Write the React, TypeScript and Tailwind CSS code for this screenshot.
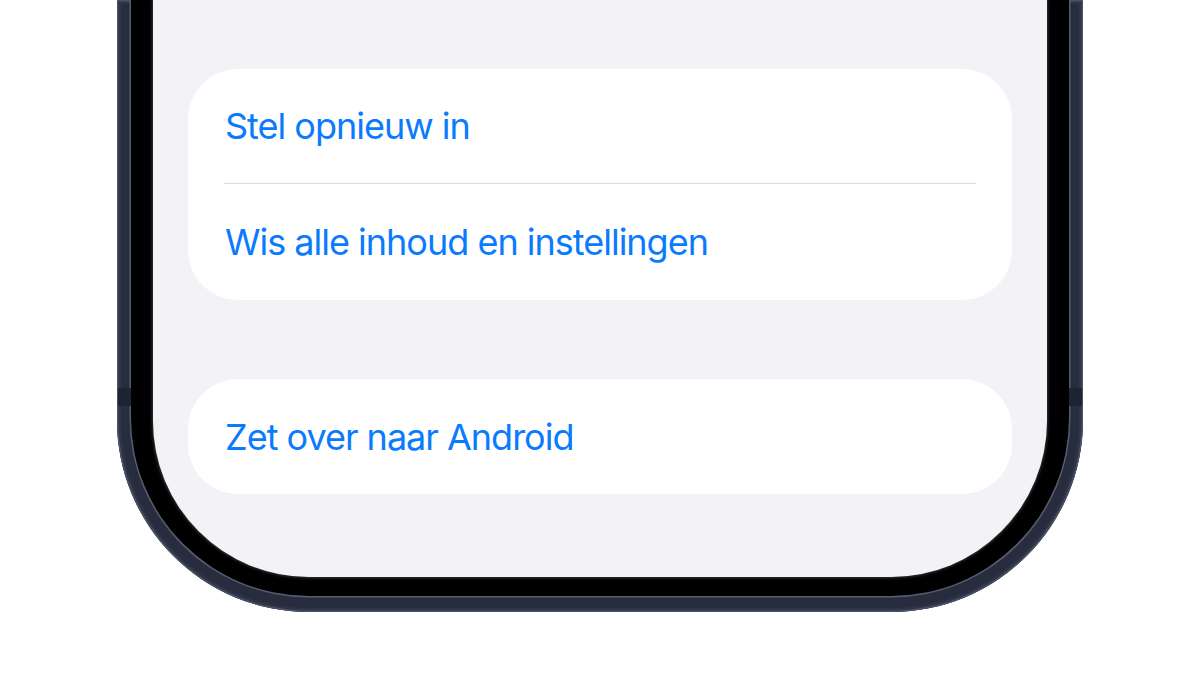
import React from "react";

const font = { fontFamily: "Inter, 'Noto Sans', sans-serif" };

function Row({ label, divider, tall }: { label: string; divider?: boolean; tall?: boolean }) {
  return (
    <div
      className={`flex items-center pl-px ${tall ? "h-[116px]" : "h-[115px]"} ${
        divider ? "border-b-[1.5px] border-[#dcdce0]" : ""
      }`}
    >
      <span className="text-[36px] leading-none tracking-[-1px] text-[#0a7bfd]" style={font}>
        {label}
      </span>
    </div>
  );
}

export default function App() {
  return (
    <div className="h-[675px] w-[1200px] overflow-hidden bg-white">
      {/* titanium band */}
      <div className="relative mx-auto h-[612px] w-[966px] rounded-b-[192px] bg-[#272d3e] px-[14px] pb-[16px] shadow-[inset_0_0_0_1.5px_#4a5266,inset_0_0_0_4px_#2f3547]">
        {/* antenna lines */}
        <div className="absolute left-[1px] top-[388px] h-[18px] w-[13px] bg-[#1f2432]" />
        <div className="absolute right-[1px] top-[388px] h-[18px] w-[13px] bg-[#1f2432]" />
        {/* black bezel */}
        <div className="h-full rounded-b-[178px] bg-black px-[22px] pb-[19px] shadow-[0_0_0_1.5px_#555d70]">
          {/* screen */}
          <div className="flex h-full flex-col gap-[79px] rounded-b-[156px] bg-[#f2f2f7] px-[35px] pt-[69px] shadow-[0_0_3px_1px_#3a3a3a]">
            <div className="flex flex-col rounded-[50px] bg-white px-[36px]">
              <Row label="Stel opnieuw in" divider />
              <Row label="Wis alle inhoud en instellingen" tall />
            </div>
            <div className="flex flex-col rounded-[50px] bg-white px-[36px]">
              <Row label="Zet over naar Android" />
            </div>
          </div>
        </div>
      </div>
    </div>
  );
}
